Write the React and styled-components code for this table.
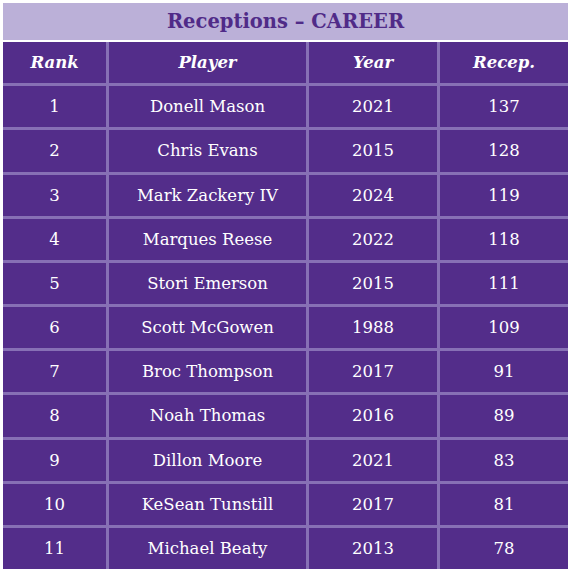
import React from 'react'
import styled, { createGlobalStyle } from 'styled-components'

const GlobalStyle = createGlobalStyle`
	body {
		margin: 0;
		background: #ffffff;
		font-family: "DejaVu Serif", "Liberation Serif", serif;
	}
`

const Wrapper = styled.div`
	width: 565px;
	padding: 3px;
`

const Title = styled.div`
	height: 37px;
	margin-bottom: 2px;
	background-color: #bbb0d8;
	color: #502b88;
	display: flex;
	align-items: center;
	justify-content: center;
	font-weight: bold;
	font-size: 19.5px;
`

const Grid = styled.div`
	display: grid;
	grid-template-columns: 103px 197px 128px 128px;
	grid-template-rows: repeat(12, 1fr);
	height: 527px;
	gap: 3px;
	background-color: #8770b5;
`

const Cell = styled.div`
	background-color: #532d8a;
	color: #ffffff;
	display: flex;
	align-items: center;
	justify-content: center;
	font-size: ${(p) => (p.$head ? '16.5px' : '16.5px')};
	font-weight: ${(p) => (p.$head ? 'bold' : 'normal')};
	font-style: ${(p) => (p.$head ? 'italic' : 'normal')};
`

const rows = [
	[1, 'Donell Mason', 2021, 137],
	[2, 'Chris Evans', 2015, 128],
	[3, 'Mark Zackery IV', 2024, 119],
	[4, 'Marques Reese', 2022, 118],
	[5, 'Stori Emerson', 2015, 111],
	[6, 'Scott McGowen', 1988, 109],
	[7, 'Broc Thompson', 2017, 91],
	[8, 'Noah Thomas', 2016, 89],
	[9, 'Dillon Moore', 2021, 83],
	[10, 'KeSean Tunstill', 2017, 81],
	[11, 'Michael Beaty', 2013, 78],
]

const App = () => {
	return (
		<Wrapper>
			<GlobalStyle />
			<Title>Receptions – CAREER</Title>
			<Grid>
				{['Rank', 'Player', 'Year', 'Recep.'].map((h) => (
					<Cell $head key={h}>{h}</Cell>
				))}
				{rows.map((r) =>
					r.map((v, i) => <Cell key={r[0] + '-' + i}>{v}</Cell>)
				)}
			</Grid>
		</Wrapper>
	)
}

export default App
